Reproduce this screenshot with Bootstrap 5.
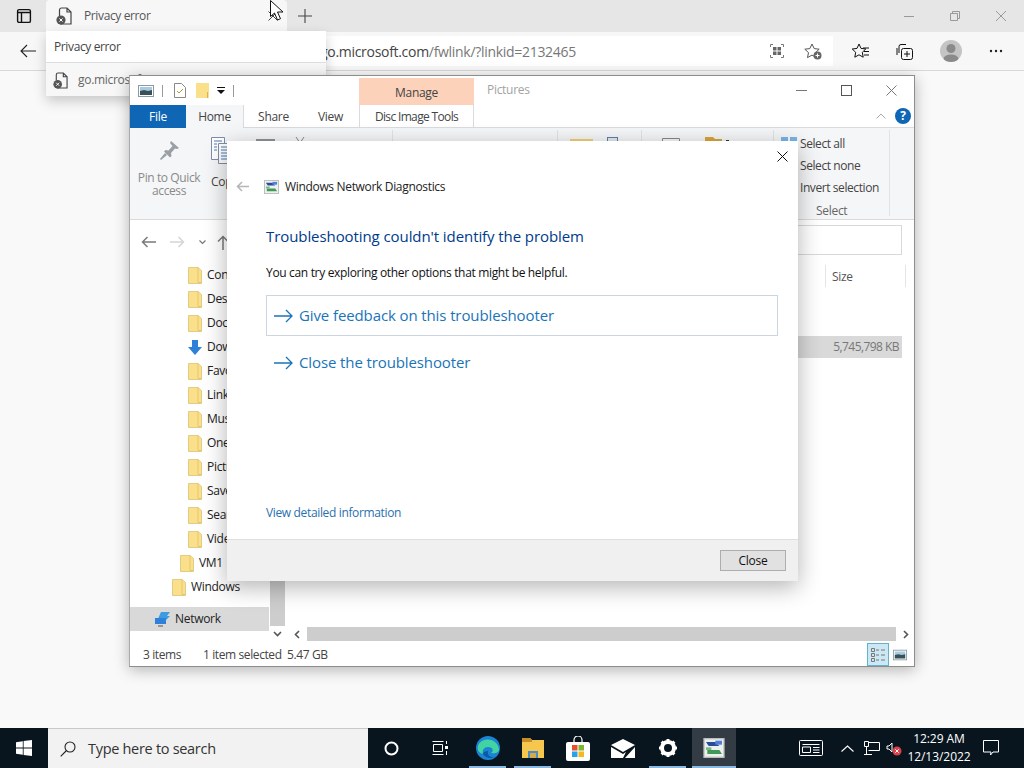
<!DOCTYPE html>
<html lang="en">
<head>
<meta charset="UTF-8">
<title>Privacy error</title>
<link href="https://cdn.jsdelivr.net/npm/bootstrap@5.3.3/dist/css/bootstrap.min.css" rel="stylesheet">
<style>
html, body { width: 1024px; height: 768px; overflow: hidden; }
body { font-family: "Open Sans", "Liberation Sans", sans-serif; font-size: 12px; letter-spacing: -.3px; color: #333; background: #f9f9f9; }
svg { display: block; flex: none; }
.screen { width: 1024px; height: 768px; position: relative; }

/* browser */
.tabstrip { height: 32px; background: #e6e6e6; }
.sidetab { width: 46px; padding-left: 2px; }
.btab { width: 241px; height: 32px; background: #f7f7f7; padding-left: 10px; color: #555; border-radius: 4px 4px 0 0; }
.btab-title { margin-left: 12px; flex: 1; letter-spacing: -.38px; }
.newtab { width: 35px; }
.winbtn { width: 46px; }
.toolbar { height: 39px; background: #f7f7f7; border-bottom: 1px solid #d8d8d8; }
.backbtn { width: 49px; padding-left: 6px; }
.addr { width: 784px; height: 30px; background: #fff; padding-left: 271px; font-size: 14px; letter-spacing: -.3px; color: #777; }
.addr b { font-weight: 400; color: #444; }
.addr-icons { gap: 20px; margin-right: 11px; }
.tb-icons { flex: 1; justify-content: space-around; padding: 0 8px 0 5px; }
.avatar { width: 22px; height: 22px; border-radius: 50%; background: #c4c4c4; overflow: hidden; }

.hover-pop { position: absolute; left: 46px; top: 31px; width: 280px; height: 65px; background: #fff; box-shadow: 0 5px 12px rgba(0,0,0,.2); color: #444; }
.hover-pop .pop-top { height: 32px; padding: 1px 0 0 8px; border-bottom: 1px solid #ddd; letter-spacing: -.38px; }
.hover-pop .pop-url { height: 33px; padding: 1px 0 0 7px; background: #f7f7f7; gap: 10px; color: #666; }

/* explorer */
.explorer { position: absolute; left: 129px; top: 75px; width: 786px; height: 592px; background: #fff; border: 1px solid #8d8d8d; border-left-color: #aaa; box-shadow: 0 3px 14px rgba(0,0,0,.28); }
.ex-title { height: 29px; position: relative; padding-left: 8px; }
.ex-sep { width: 1px; height: 12px; background: #999; }
.sep-a { margin: 0 11px 0 8px; }
.sep-b { margin-left: 8px; }
.doc-icon { margin-right: 10px; }
.fold-icon { margin-right: 8px; }
.ctx-tab { position: absolute; left: 229px; top: 2px; width: 115px; height: 27px; background: #fcd2bb; color: #444; padding-top: 2px; }
.ctx-name { position: absolute; left: 357px; top: 5px; color: #a3a3a3; }
.ex-ctrls { margin-left: auto; gap: 34px; padding-right: 17px; }
.ex-tabs { height: 23px; border-bottom: 1px solid #dadbdc; position: relative; }
.ex-tab { height: 23px; color: #444; padding-top: 2px; }
.ex-tab.is-file { width: 56px; background: #0f66b5; color: #fff; }
.ex-tab.is-home { width: 58px; background: #f5f6f7; border-right: 1px solid #dadbdc; margin-right: 1px; }
.ex-tab.is-plain { width: 57px; }
.ex-tab.is-disc { width: 115px; border-left: 1px solid #dadbdc; border-right: 1px solid #dadbdc; letter-spacing: -.65px; }
.ex-help { margin-left: auto; gap: 9px; padding-right: 3px; }
.helpdot { width: 16px; height: 16px; border-radius: 50%; background: #0f66b5; color: #fff; font-weight: 700; font-size: 12px; letter-spacing: 0; padding-top: 0; }
.ribbon { height: 92px; background: #f5f6f7; border-bottom: 1px solid #dadbdc; position: relative; color: #444; }
.rb-pin { position: absolute; left: 5px; top: 12px; width: 68px; text-align: center; color: #8a8a8a; line-height: 13px; letter-spacing: -.4px; }
.rb-pin svg { margin: 0 auto 9px; }
.rb-copy { position: absolute; left: 81px; top: 9px; }
.rb-copy svg { margin-bottom: 8px; }
.rb-peek { position: absolute; }
.peek-cut { left: 126px; top: 9px; }
.peek-scis { left: 165px; top: 9px; }
.peek-cuttext { position: absolute; left: 181px; top: 9px; }
.peek-move { left: 440px; top: 11px; }
.peek-copyto { left: 477px; top: 9px; }
.peek-new { left: 532px; top: 10px; }
.peek-props { left: 575px; top: 9px; }
.peek-all { left: 651px; top: 9px; }
.rb-select { position: absolute; left: 670px; top: 5px; line-height: 22px; white-space: nowrap; letter-spacing: -.42px; }
.rb-select-label { position: absolute; left: 686px; top: 74px; color: #666; }
.rb-divider { position: absolute; top: 2px; width: 1px; height: 86px; background: #e2e3e4; }
.dv-1 { left: 262px; }
.dv-2 { left: 427px; }
.dv-3 { left: 511px; }
.dv-4 { left: 643px; }
.dv-5 { left: 759px; }
.ex-nav { height: 42px; position: relative; padding: 2px 0 0 11px; gap: 14px; }
.nav-up { margin-left: -3px; }
.searchbox { position: absolute; right: 12px; top: 5px; width: 130px; height: 30px; border: 1px solid #d9d9d9; background: #fff; }
.ex-body { height: 383px; }
.tree { width: 139px; color: #222; }
.tree-row { height: 24px; gap: 5px; white-space: nowrap; padding-top: 2px; }
.lv3 { padding-left: 58px; }
.lv2 { padding-left: 50px; }
.lv1 { padding-left: 42px; }
.tree-net { margin-top: 9px; background: #d9d9d9; padding: 0 0 0 24px; gap: 4px; }
.treebar { width: 16px; position: relative; background: #fff; }
.treebar .thumb { position: absolute; left: 1px; right: 0; top: 0; bottom: 19px; background: #cdcdcd; }
.treebar .down { position: absolute; left: 0; right: 0; bottom: 4px; height: 14px; }
.files { flex: 1; position: relative; min-width: 0; }
.col-size { position: absolute; left: 547px; top: 6px; color: #555; }
.col-rule { position: absolute; top: 3px; width: 1px; height: 22px; background: #e5e5e5; }
.rule-a { left: 540px; }
.rule-b { left: 620px; }
.file-row { position: absolute; left: 0; right: 12px; top: 74px; height: 22px; background: #d9d9d9; color: #777; padding-right: 3px; letter-spacing: -.55px; }
.hbar { position: absolute; left: 4px; right: 0; bottom: 4px; height: 14px; }
.hbar .track { flex: 1; height: 14px; background: #cdcdcd; margin: 0 2px; }
.hbar .arrow { width: 16px; }
.ex-status { height: 21px; padding: 0 13px 2px; position: relative; color: #444; gap: 22px; letter-spacing: -.4px; }
.ex-views { position: absolute; right: 7px; top: -2px; gap: 4px; }
.viewbtn { width: 22px; height: 23px; background: #cde8f5; border: 1px solid #63b2d0; }

/* dialog */
.diag { position: absolute; left: 227px; top: 141px; width: 571px; height: 440px; background: #fff; box-shadow: 0 6px 22px rgba(0,0,0,.3); display: flex; flex-direction: column; }
.diag-x { position: absolute; right: 10px; top: 10px; }
.diag-head { height: 46px; padding: 45px 0 0 9px; gap: 15px; color: #222; }
.diag-head .diag-name { margin-left: -9px; letter-spacing: -.33px; }
.diag-main { flex: 1; padding: 0 20px 0 39px; position: relative; }
.diag-h { margin: 0; font-size: 15px; font-weight: 400; letter-spacing: -.08px; color: #003b8a; padding-top: 38px; line-height: 22px; }
.diag-p { margin: 0; padding-top: 17px; line-height: 18px; color: #111; letter-spacing: -.33px; }
.cmd { height: 41px; margin-top: 13px; padding-left: 7px; gap: 6px; color: #1a74b8; font-size: 15px; letter-spacing: -.11px; border: 1px solid transparent; }
.cmd.is-on { border-color: #ccd6e0; }
.cmd + .cmd { margin-top: 6px; }
.diag-link { position: absolute; left: 39px; bottom: 17px; color: #2a6fb0; letter-spacing: -.35px; }
.diag-foot { height: 42px; background: #f0f0f0; border-top: 1px solid #dfdfdf; padding-right: 12px; }
.closebtn { width: 66px; height: 21px; padding: 0; border: 1px solid #adadad; background: #e1e1e1; color: #111; font-size: 12px; border-radius: 0; letter-spacing: -.25px; line-height: 18px; }

.cursor { position: absolute; left: 270px; top: 0; }

/* taskbar */
.taskbar { position: absolute; left: 0; right: 0; bottom: 0; height: 40px; background: #08151f; color: #fff; }
.tb-start { width: 48px; }
.tb-search { width: 320px; height: 40px; background: #f2f2f2; color: #333; border-top: 1px solid #c9c9c9; padding-left: 12px; gap: 12px; font-size: 14.5px; letter-spacing: -.3px; }
.tb-app { width: 45px; height: 40px; position: relative; }
.tb-app.is-cortana { width: 47px; }
.tb-app.is-view { margin: 0 3px 0 2px; }
.tb-app.is-run::after { content: ""; position: absolute; left: 4px; right: 4px; bottom: 0; height: 2px; background: #8bb8e0; }
.tb-app.is-cur { background: #333c44; width: 44px; margin-left: 2px; }
.tb-app.is-cur::after { left: 0; right: 0; }
.tb-tray { margin-left: auto; }
.tray-caret { margin-left: 18px; }
.tray-net { margin-left: 10px; }
.tray-vol { margin-left: 6px; }
.tb-clock { width: 72px; margin-left: 1px; text-align: center; line-height: 18px; font-size: 12px; letter-spacing: -.05px; }
.tray-note { margin: 0 25px 0 8px; }
</style>
</head>
<body>
<svg width="0" height="0" class="position-absolute">
  <symbol id="folder" viewBox="0 0 14 17">
    <path d="M.5.5h9.500l3.500 3v13H.5z" fill="#fbe08c" stroke="#e2cb86"/>
    <path d="M10 .5v15h3.500" fill="none" stroke="#e6c66c"/>
  </symbol>
  <symbol id="errdoc" viewBox="0 0 16 18">
    <path d="M5 1h6l4 4v12H4M11 1v4h4" fill="none" stroke="#444" stroke-width="1.200"/>
    <path d="M5 1a2 2 0 0 0-1.500 2v6" fill="none" stroke="#444" stroke-width="1.200"/>
    <circle cx="5" cy="13" r="4.600" fill="#555"/>
    <path d="M3.400 11.400l3.200 3.200M6.600 11.400l-3.200 3.200" stroke="#fff"/>
  </symbol>
  <symbol id="photo" viewBox="0 0 16 12">
    <rect x=".5" y=".5" width="15" height="11" fill="#fff" stroke="#8c9aa5"/>
    <rect x="2" y="2" width="12" height="4" fill="#a8cbe0"/>
    <path d="M2 6l4-1 4 1 4-1v5H2z" fill="#37505a"/>
  </symbol>
  <symbol id="netdiag" viewBox="0 0 16 15">
    <rect x=".5" y=".5" width="15" height="14" fill="#eef0ef" stroke="#bbb"/>
    <path d="M2 3h7l3 3H4z" fill="#2a4a9a"/>
    <rect x="9" y="2" width="5" height="3" fill="#4f7fd6"/>
    <path d="M3 9h9l2 3H3z" fill="#3f9a55"/>
    <rect x="2" y="7" width="4" height="2" fill="#7ab87f"/>
  </symbol>
</svg>

<div class="screen">
  <div class="tabstrip d-flex">
    <div class="sidetab d-flex align-items-center justify-content-center">
      <svg width="16" height="16" viewBox="0 0 16 16" fill="none" stroke="#111" stroke-width="1.400"><rect x="1.600" y="1.600" width="12.800" height="12.800" rx="1.500"/><path d="M1.600 4.500h12.800M5.500 4.500v9.900"/></svg>
    </div>
    <div class="btab d-flex align-items-center">
      <svg width="16" height="18"><use href="#errdoc"/></svg>
      <span class="btab-title">Privacy error</span>
      <svg class="me-2" width="12" height="12" viewBox="0 0 12 12" stroke="#444"><path d="M1.500 1.500l9 9M10.500 1.500l-9 9"/></svg>
    </div>
    <div class="newtab d-flex align-items-center justify-content-center">
      <svg width="14" height="14" viewBox="0 0 14 14" stroke="#444" stroke-width="1.100"><path d="M7 0v14M0 7h14"/></svg>
    </div>
    <div class="d-flex ms-auto">
      <div class="winbtn d-flex align-items-center justify-content-center"><svg width="10" height="10" stroke="#999"><path d="M0 5.500h10"/></svg></div>
      <div class="winbtn d-flex align-items-center justify-content-center"><svg width="10" height="10" fill="none" stroke="#999"><path d="M.5 2.500h7v7h-7zM2.500 2.500v-2h7v7h-2"/></svg></div>
      <div class="winbtn d-flex align-items-center justify-content-center"><svg width="12" height="12" stroke="#999"><path d="M1 1l10 10M11 1L1 11"/></svg></div>
    </div>
  </div>

  <div class="toolbar d-flex align-items-center">
    <div class="backbtn d-flex align-items-center justify-content-center">
      <svg width="16" height="14" viewBox="0 0 16 14" fill="none" stroke="#222" stroke-width="1.100"><path d="M16 7H1M7 1L1 7l6 6"/></svg>
    </div>
    <div class="addr d-flex align-items-center">
      <span class="flex-grow-1"><b>go.microsoft.com</b>/fwlink/?linkid=2132465</span>
      <div class="addr-icons d-flex align-items-center">
        <svg width="14" height="14" viewBox="0 0 14 14"><path d="M.5 3V.5H3M11 .5h2.500V3M13.500 11v2.500H11M3 13.500H.5V11" fill="none" stroke="#777"/><rect x="3" y="3" width="3.500" height="3.500" fill="#666"/><rect x="7.500" y="3" width="3.500" height="3.500" fill="#666"/><rect x="3" y="7.500" width="3.500" height="3.500" fill="#666"/><rect x="7.500" y="7.500" width="3.500" height="3.500" fill="#666"/></svg>
        <svg width="18" height="17" viewBox="0 0 18 17"><path d="M8 1l2.200 4.600 5 .6-3.700 3.400 1 5L8 12.100 3.500 14.600l1-5L.8 6.200l5-.6z" fill="none" stroke="#555"/><circle cx="13.500" cy="12.500" r="4" fill="#666"/><path d="M13.500 10.500v4M11.500 12.500h4" stroke="#fff"/></svg>
      </div>
    </div>
    <div class="tb-icons d-flex align-items-center">
      <svg width="17" height="16" viewBox="0 0 17 16"><path d="M7 1l2 4.400 4.800.6-3.500 3.300.9 4.900L7 11.800 2.800 14.200l.9-4.900L.2 6 5 5.400z" fill="none" stroke="#111"/><path d="M11 5h6M12 8.500h5M12 12h5" stroke="#111"/></svg>
      <svg width="17" height="17" viewBox="0 0 17 17" fill="none" stroke="#111"><path d="M3 10V3.500A2 2 0 0 1 5 1.500h5"/><path d="M1 5v7"/><rect x="5.500" y="5.500" width="11" height="11" rx="2"/><path d="M11 8v6M8 11h6"/></svg>
      <div class="avatar">
        <svg width="22" height="22" viewBox="0 0 22 22" fill="#8a8a8a"><circle cx="11" cy="8.500" r="4.500"/><ellipse cx="11" cy="19" rx="7.500" ry="4.500"/></svg>
      </div>
      <svg width="14" height="4" viewBox="0 0 14 4" fill="#222"><circle cx="2" cy="2" r="1.200"/><circle cx="7" cy="2" r="1.200"/><circle cx="12" cy="2" r="1.200"/></svg>
    </div>
  </div>

  <div class="hover-pop">
    <div class="pop-top d-flex align-items-center">Privacy error</div>
    <div class="pop-url d-flex align-items-center">
      <svg width="15" height="17"><use href="#errdoc"/></svg>
      <span>go.microsoft.com</span>
    </div>
  </div>

  <div class="explorer d-flex flex-column">
    <div class="ex-title d-flex align-items-center">
      <svg width="16" height="12"><use href="#photo"/></svg>
      <span class="ex-sep sep-a"></span>
      <svg class="doc-icon" width="12" height="15" viewBox="0 0 12 15"><path d="M.5.5h7l4 4v10H.5z" fill="#fff" stroke="#888"/><path d="M3 8l2 2 4-4" fill="none" stroke="#b89a2a"/></svg>
      <svg class="fold-icon" width="13" height="15" viewBox="0 0 13 15"><rect width="13" height="15" fill="#fbe08c"/><path d="M11.500 9v6" stroke="#d9b34a"/></svg>
      <svg width="8" height="7" viewBox="0 0 8 7" fill="#111"><path d="M0 0h8v1H0zM0 3h8L4 7z"/></svg>
      <span class="ex-sep sep-b"></span>
      <div class="ctx-tab d-flex align-items-center justify-content-center">Manage</div>
      <span class="ctx-name">Pictures</span>
      <div class="ex-ctrls d-flex align-items-center">
        <svg width="11" height="11" stroke="#777"><path d="M0 5.500h11"/></svg>
        <svg width="11" height="11" fill="none" stroke="#555"><rect x=".5" y=".5" width="10" height="10"/></svg>
        <svg width="11" height="11" stroke="#777"><path d="M.5.500l10 10M10.500.500l-10 10"/></svg>
      </div>
    </div>
    <div class="ex-tabs d-flex align-items-center">
      <div class="ex-tab is-file d-flex align-items-center justify-content-center">File</div>
      <div class="ex-tab is-home d-flex align-items-center justify-content-center">Home</div>
      <div class="ex-tab is-plain d-flex align-items-center justify-content-center">Share</div>
      <div class="ex-tab is-plain d-flex align-items-center justify-content-center">View</div>
      <div class="ex-tab is-disc d-flex align-items-center justify-content-center">Disc Image Tools</div>
      <div class="ex-help d-flex align-items-center">
        <svg width="10" height="6" fill="none" stroke="#aaa"><path d="M.5 5.500l4.500-4.500 4.500 4.500"/></svg>
        <div class="helpdot d-flex align-items-center justify-content-center">?</div>
      </div>
    </div>
    <div class="ribbon">
      <div class="rb-pin">
        <svg width="22" height="22" viewBox="0 0 22 22" fill="#9a9fa6"><path d="M13 1l8 7-2 1-2-.5-4 4.500.5 3-1.500 1.500-6-6 1.500-1.500 3 .5 4-4.500L12 3z"/><path d="M7 13l-5 6 1 1 6-5z"/></svg>
        Pin to Quick<br>access
      </div>
      <div class="rb-copy">
        <svg width="22" height="28" viewBox="0 0 22 28" fill="#fff" stroke="#7f8fa6"><path d="M.5.500h13v22H.5z"/><path d="M7.500 6.500h13v20h-13z"/><path d="M3 4h8M3 7h3M3 10h3M3 13h3M10 10h8M10 13h8M10 16h8M10 19h8M10 22h8" stroke="#4a7ab5"/></svg>
        Copy
      </div>
      <svg class="rb-peek peek-cut" width="19" height="6"><path d="M0 2h19v2H0z" fill="#8f9399"/></svg>
      <svg class="rb-peek peek-scis" width="10" height="6" fill="none" stroke="#888"><path d="M1 0l4 6M9 0L5 6"/></svg>
      <span class="peek-cuttext">Cut</span>
      <svg class="rb-peek peek-move" width="23" height="4"><rect width="23" height="4" fill="#f3cf74"/></svg>
      <svg class="rb-peek peek-copyto" width="11" height="6" fill="#dfe8f2" stroke="#5f7fa8"><rect x=".5" y=".5" width="10" height="7"/></svg>
      <svg class="rb-peek peek-new" width="18" height="4" fill="none" stroke="#888"><path d="M.5 4V.5h17V4"/></svg>
      <svg class="rb-peek peek-props" width="24" height="5"><path d="M0 0h8l2 2h7v3H0z" fill="#d9a53c"/><path d="M21 3h3v2h-3z" fill="#333"/></svg>
      <svg class="rb-peek peek-all" width="16" height="5"><rect width="7" height="5" fill="#78b4e8"/><rect x="9" width="7" height="5" fill="#78b4e8"/></svg>
      <div class="rb-select">Select all<br>Select none<br>Invert selection</div>
      <div class="rb-select-label">Select</div>
      <div class="rb-divider dv-1"></div>
      <div class="rb-divider dv-2"></div>
      <div class="rb-divider dv-3"></div>
      <div class="rb-divider dv-4"></div>
      <div class="rb-divider dv-5"></div>
    </div>
    <div class="ex-nav d-flex align-items-center">
      <svg width="15" height="12" viewBox="0 0 15 12" fill="none" stroke="#7a7a7a" stroke-width="1.500"><path d="M15 6H1.500M6.500 1l-5 5 5 5"/></svg>
      <svg width="15" height="12" viewBox="0 0 15 12" fill="none" stroke="#d5d5d5" stroke-width="1.500"><path d="M0 6h13.500M8.500 1l5 5-5 5"/></svg>
      <svg width="7" height="5" viewBox="0 0 7 5" fill="none" stroke="#777" stroke-width="1.200"><path d="M.5.500l3 3 3-3"/></svg>
      <svg class="nav-up" width="12" height="15" viewBox="0 0 12 15" fill="none" stroke="#7a7a7a" stroke-width="1.500"><path d="M6 15V1.500M1 6.500l5-5 5 5"/></svg>
      <div class="searchbox"></div>
    </div>
    <div class="ex-body d-flex">
      <div class="tree">
        <div class="tree-row lv3 d-flex align-items-center"><svg width="14" height="17"><use href="#folder"/></svg><span>Contacts</span></div>
        <div class="tree-row lv3 d-flex align-items-center"><svg width="14" height="17"><use href="#folder"/></svg><span>Desktop</span></div>
        <div class="tree-row lv3 d-flex align-items-center"><svg width="14" height="17"><use href="#folder"/></svg><span>Documents</span></div>
        <div class="tree-row lv3 d-flex align-items-center"><svg width="14" height="17" viewBox="0 0 14 17"><path d="M4 1h6v7h4l-7 8-7-8h4z" fill="#2f80d8"/></svg><span>Downloads</span></div>
        <div class="tree-row lv3 d-flex align-items-center"><svg width="14" height="17"><use href="#folder"/></svg><span>Favorites</span></div>
        <div class="tree-row lv3 d-flex align-items-center"><svg width="14" height="17"><use href="#folder"/></svg><span>Links</span></div>
        <div class="tree-row lv3 d-flex align-items-center"><svg width="14" height="17"><use href="#folder"/></svg><span>Music</span></div>
        <div class="tree-row lv3 d-flex align-items-center"><svg width="14" height="17"><use href="#folder"/></svg><span>OneDrive</span></div>
        <div class="tree-row lv3 d-flex align-items-center"><svg width="14" height="17"><use href="#folder"/></svg><span>Pictures</span></div>
        <div class="tree-row lv3 d-flex align-items-center"><svg width="14" height="17"><use href="#folder"/></svg><span>Saved Games</span></div>
        <div class="tree-row lv3 d-flex align-items-center"><svg width="14" height="17"><use href="#folder"/></svg><span>Searches</span></div>
        <div class="tree-row lv3 d-flex align-items-center"><svg width="14" height="17"><use href="#folder"/></svg><span>Videos</span></div>
        <div class="tree-row lv2 d-flex align-items-center"><svg width="14" height="17"><use href="#folder"/></svg><span>VM1</span></div>
        <div class="tree-row lv1 d-flex align-items-center"><svg width="14" height="17"><use href="#folder"/></svg><span>Windows</span></div>
        <div class="tree-row tree-net d-flex align-items-center">
          <svg width="17" height="16" viewBox="0 0 17 16"><path d="M7 1h9l-3 4h3l-5 5H3z" fill="#3d9be0"/><rect x="1" y="7" width="11" height="6" fill="#2f80d8"/><path d="M4 15h5" stroke="#555"/></svg>
          <span>Network</span>
        </div>
      </div>
      <div class="treebar">
        <div class="thumb"></div>
        <div class="down d-flex align-items-center justify-content-center"><svg width="9" height="6" fill="none" stroke="#555" stroke-width="1.600"><path d="M1 1l3.500 3.500L8 1"/></svg></div>
      </div>
      <div class="files">
        <div class="col-size">Size</div>
        <div class="col-rule rule-a"></div>
        <div class="col-rule rule-b"></div>
        <div class="file-row d-flex align-items-center justify-content-end">5,745,798 KB</div>
        <div class="hbar d-flex align-items-center">
          <div class="arrow d-flex align-items-center justify-content-center"><svg width="6" height="9" fill="none" stroke="#555" stroke-width="1.600"><path d="M5 1L1.500 4.500 5 8"/></svg></div>
          <div class="track"></div>
          <div class="arrow d-flex align-items-center justify-content-center"><svg width="6" height="9" fill="none" stroke="#555" stroke-width="1.600"><path d="M1 1l3.500 3.500L1 8"/></svg></div>
        </div>
      </div>
    </div>
    <div class="ex-status d-flex align-items-center">
      <span>3 items</span>
      <span>1 item selected&nbsp; 5.47 GB</span>
      <div class="ex-views d-flex align-items-center">
        <div class="viewbtn d-flex align-items-center justify-content-center">
          <svg width="16" height="16" viewBox="0 0 16 16" fill="none" stroke="#777"><path d="M1.500 1.500h3v3h-3zM1.500 6.500h3v3h-3zM1.500 11.500h3v3h-3zM6 3h3M11 3h4M6 8h3M11 8h4M6 13h3M11 13h4"/></svg>
        </div>
        <svg width="14" height="12"><use href="#photo"/></svg>
      </div>
    </div>
  </div>

  <div class="diag">
    <svg class="diag-x" width="11" height="11" stroke="#111"><path d="M.5.500l10 10M10.500.500l-10 10"/></svg>
    <div class="diag-head d-flex align-items-center">
      <svg width="13" height="11" viewBox="0 0 13 11" fill="none" stroke="#b5b5b5" stroke-width="1.500"><path d="M13 5.500H1.500M6 1L1.500 5.500 6 10"/></svg>
      <svg width="15" height="14"><use href="#netdiag"/></svg>
      <span class="diag-name">Windows Network Diagnostics</span>
    </div>
    <div class="diag-main">
      <h1 class="diag-h">Troubleshooting couldn't identify the problem</h1>
      <p class="diag-p">You can try exploring other options that might be helpful.</p>
      <div class="cmd is-on d-flex align-items-center">
        <svg width="19" height="14" viewBox="0 0 19 14" fill="none" stroke="#1a74b8" stroke-width="1.300"><path d="M0 7h18M12 1l6 6-6 6"/></svg>
        <span>Give feedback on this troubleshooter</span>
      </div>
      <div class="cmd d-flex align-items-center">
        <svg width="19" height="14" viewBox="0 0 19 14" fill="none" stroke="#1a74b8" stroke-width="1.300"><path d="M0 7h18M12 1l6 6-6 6"/></svg>
        <span>Close the troubleshooter</span>
      </div>
      <a class="diag-link text-decoration-none" href="#">View detailed information</a>
    </div>
    <div class="diag-foot d-flex align-items-center justify-content-end">
      <button type="button" class="btn closebtn">Close</button>
    </div>
  </div>

  <svg class="cursor" width="14" height="22" viewBox="0 0 14 22"><path d="M.5.500v16l4-3.500 3 7 3-1.300-3-6.700h5.500z" fill="#fff" stroke="#111"/></svg>

  <div class="taskbar d-flex align-items-center">
    <div class="tb-start d-flex align-items-center justify-content-center">
      <svg width="16" height="16" viewBox="0 0 16 16" fill="#fff"><path d="M0 2.200l6.800-1v6.300H0zM7.600 1l8.400-1v7.500H7.600zM0 8.400h6.800v6.400L0 13.800zM7.600 8.400H16V16l-8.400-1.100z"/></svg>
    </div>
    <div class="tb-search d-flex align-items-center">
      <svg width="16" height="16" viewBox="0 0 16 16" fill="none" stroke="#222" stroke-width="1.100"><circle cx="10" cy="6" r="5"/><path d="M6.500 9.500L.7 15.300"/></svg>
      <span>Type here to search</span>
    </div>
    <div class="tb-app is-cortana d-flex align-items-center justify-content-center">
      <svg width="15" height="15" fill="none" stroke="#fff" stroke-width="2"><circle cx="7.500" cy="7.500" r="6"/></svg>
    </div>
    <div class="tb-app is-view d-flex align-items-center justify-content-center">
      <svg width="16" height="16" viewBox="0 0 16 16" fill="none" stroke="#fff"><path d="M.5 1.500h11M.5 14.500h11M1.500 4.500h9v7h-9zM14.500 1v3M14.500 11v4"/><rect x="13" y="6" width="3" height="3" fill="#fff" stroke="none"/></svg>
    </div>
    <div class="tb-app is-run d-flex align-items-center justify-content-center">
      <svg width="24" height="24" viewBox="0 0 24 24"><circle cx="12" cy="12" r="12" fill="#1b83d4"/><path d="M2 10C4 2 20 0 23 13c.5 4-5 5-8 4 3-2 2-6-3-6-4 0-6 3-5 7C3 17 1 14 2 10z" fill="#41d3a2"/><path d="M7 18c2 4 8 5 12 3-5 1-8-2-7-6-2 0-5 1-5 3z" fill="#0c59a4"/></svg>
    </div>
    <div class="tb-app is-run d-flex align-items-center justify-content-center">
      <svg width="22" height="20" viewBox="0 0 22 20"><path d="M0 0h8l2 2h12v18H0z" fill="#f5c74f"/><path d="M0 0h8l2 2v2H0z" fill="#c98f24"/><rect x="6" y="13" width="10" height="7" fill="#4a8fc4"/><rect x="8" y="15" width="6" height="5" fill="#d7a94a"/></svg>
    </div>
    <div class="tb-app d-flex align-items-center justify-content-center">
      <svg width="24" height="25" viewBox="0 0 24 25"><path d="M8 6V4a4 4 0 0 1 8 0v2" fill="none" stroke="#fff" stroke-width="1.200"/><rect y="6" width="24" height="19" rx="2" fill="#fff"/><rect x="6" y="9" width="5.500" height="5.500" fill="#e5502d"/><rect x="12.500" y="9" width="5.500" height="5.500" fill="#7cb82f"/><rect x="6" y="15.500" width="5.500" height="5.500" fill="#28a2e8"/><rect x="12.500" y="15.500" width="5.500" height="5.500" fill="#f6b81a"/></svg>
    </div>
    <div class="tb-app d-flex align-items-center justify-content-center">
      <svg width="24" height="19" viewBox="0 0 24 19" fill="#fff"><path d="M0 6L12 0l12 6-12 7z"/><path d="M0 8l12 7 3-2-3 6H0zM24 8v11H14z"/></svg>
    </div>
    <div class="tb-app is-run d-flex align-items-center justify-content-center">
      <svg width="18" height="18" viewBox="0 0 18 18"><circle cx="9" cy="9" r="6" fill="none" stroke="#fff" stroke-width="4"/><path d="M9 0v4M9 14v4M0 9h4M14 9h4M2.600 2.600l2.800 2.800M12.600 12.600l2.800 2.800M15.400 2.600l-2.800 2.800M5.400 12.600l-2.800 2.800" stroke="#fff" stroke-width="3"/></svg>
    </div>
    <div class="tb-app is-cur is-run d-flex align-items-center justify-content-center">
      <svg width="22" height="20"><use href="#netdiag"/></svg>
    </div>
    <div class="tb-tray d-flex align-items-center">
      <svg width="24" height="16" viewBox="0 0 24 16" fill="none" stroke="#fff"><rect x=".5" y=".5" width="23" height="15" rx="1"/><path d="M3.500 4.500h17M3.500 7h8v5.500h-8zM14 7.500h6.500M14 10h6.500M14 12.500h6.500"/></svg>
      <svg class="tray-caret" width="13" height="7" fill="none" stroke="#fff" stroke-width="1.100"><path d="M.5 6.500l6-5.500 6 5.500"/></svg>
      <svg class="tray-net" width="16" height="14" viewBox="0 0 16 14" fill="none" stroke="#fff"><path d="M4.500 1.500h11v8h-11M.5.500h4v5h-4zM2.500 5.500v7.500M0 13.500h8"/></svg>
      <svg class="tray-vol" width="16" height="16" viewBox="0 0 16 16"><path d="M1 6h2l3-3v9L3 9H1z" fill="none" stroke="#fff"/><circle cx="11" cy="11" r="4.500" fill="#d9404a"/><path d="M9.300 9.300l3.400 3.400M12.700 9.300l-3.400 3.400" stroke="#fff"/></svg>
      <div class="tb-clock">12:29 AM<br>12/13/2022</div>
      <svg class="tray-note" width="16" height="16" viewBox="0 0 16 16" fill="none" stroke="#fff"><path d="M.5.500h15v11.500H10L7.500 15 8 12H.5z"/></svg>
    </div>
  </div>
</div>
<script src="https://cdn.jsdelivr.net/npm/bootstrap@5.3.3/dist/js/bootstrap.bundle.min.js"></script>
</body>
</html>
